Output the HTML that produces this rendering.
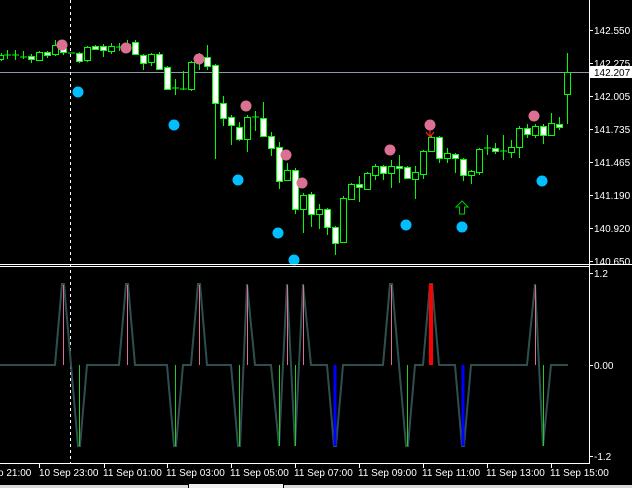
<!DOCTYPE html>
<html><head><meta charset="utf-8"><style>
html,body{margin:0;padding:0;background:#000;width:632px;height:488px;overflow:hidden}
svg{display:block}
text{font-family:"Liberation Sans",sans-serif;font-size:10px;fill:#fff}
</style></head><body>
<svg width="632" height="488" viewBox="0 0 632 488" xmlns="http://www.w3.org/2000/svg">
<rect width="632" height="488" fill="#000"/>
<line x1="0" y1="72.5" x2="589" y2="72.5" stroke="#8a9aa8" stroke-width="1"/>
<line x1="70.5" y1="0" x2="70.5" y2="463" stroke="#fff" stroke-dasharray="3,3"/>
<g stroke="#00ff00" stroke-width="1" shape-rendering="crispEdges">
<path d="M1.5 53V61M7.5 50V59M15.5 50V60M23.5 51V59M31.5 54V63M39.5 51V61M47.5 51V58M55.5 40V56M63.5 44V55M79.5 52V63M87.5 46V62M95.5 45V49M103.5 44V57M111.5 43V54M119.5 43V51M127.5 40V50M135.5 40V55M143.5 54V70M151.5 53V66M159.5 52V70M167.5 66V90M175.5 79V95M183.5 71V90M191.5 61V91M199.5 53V70M207.5 45V70M215.5 64V159M223.5 96V126M231.5 115V145M239.5 122V141M247.5 115V152M255.5 111V131M263.5 102V137M271.5 132V156M279.5 142V189M287.5 163V181M295.5 168V214M303.5 193V233M311.5 192V227M319.5 204V229M327.5 208V235M335.5 226V255M343.5 196V243M351.5 183V200M359.5 176V202M367.5 172V190M375.5 164V180M383.5 165V180M391.5 160V188M399.5 155V183M407.5 166V179M415.5 166V199M423.5 150V179M431.5 136V152M439.5 136V163M447.5 148V163M455.5 153V173M463.5 158V181M471.5 170V184M479.5 148V175M487.5 135V155M495.5 143V154M503.5 135V160M511.5 140V158M519.5 126V158M527.5 124V138M535.5 124V138M543.5 124V144M551.5 113V136M559.5 117V130M567.5 53V124"/>
<path d="M4 55H11M12 55H19M20 57H27M68 53H75M116 47H123M172 88H179M180 89H187M252 117H259M484 148H491M500 151H507"/>
</g>
<g fill="#000" stroke="#00ff00" stroke-width="1" shape-rendering="crispEdges">
<rect x="-1.5" y="55.5" width="5" height="4"/>
<rect x="36.5" y="52.5" width="6" height="8"/>
<rect x="52.5" y="45.5" width="6" height="9"/>
<rect x="84.5" y="47.5" width="6" height="13"/>
<rect x="108.5" y="46.5" width="6" height="5"/>
<rect x="124.5" y="44.5" width="6" height="4"/>
<rect x="148.5" y="54.5" width="6" height="8"/>
<rect x="188.5" y="62.5" width="6" height="27"/>
<rect x="244.5" y="117.5" width="6" height="22"/>
<rect x="284.5" y="170.5" width="6" height="10"/>
<rect x="300.5" y="195.5" width="6" height="14"/>
<rect x="316.5" y="209.5" width="6" height="5"/>
<rect x="340.5" y="198.5" width="6" height="44"/>
<rect x="348.5" y="184.5" width="6" height="15"/>
<rect x="364.5" y="173.5" width="6" height="16"/>
<rect x="372.5" y="166.5" width="6" height="9"/>
<rect x="388.5" y="166.5" width="6" height="7"/>
<rect x="412.5" y="172.5" width="6" height="7"/>
<rect x="420.5" y="151.5" width="6" height="23"/>
<rect x="428.5" y="137.5" width="6" height="14"/>
<rect x="444.5" y="153.5" width="6" height="5"/>
<rect x="468.5" y="171.5" width="6" height="4"/>
<rect x="476.5" y="149.5" width="6" height="23"/>
<rect x="508.5" y="147.5" width="6" height="5"/>
<rect x="516.5" y="128.5" width="6" height="19"/>
<rect x="532.5" y="126.5" width="6" height="9"/>
<rect x="548.5" y="123.5" width="6" height="12"/>
<rect x="564.5" y="72.5" width="6" height="22"/>
</g>
<g fill="#fff" stroke="#00ff00" stroke-width="1" shape-rendering="crispEdges">
<rect x="28.5" y="56.5" width="6" height="3"/>
<rect x="44.5" y="52.5" width="6" height="3"/>
<rect x="60.5" y="48.5" width="6" height="4"/>
<rect x="76.5" y="53.5" width="6" height="8"/>
<rect x="92.5" y="46.5" width="6" height="3"/>
<rect x="100.5" y="46.5" width="6" height="4"/>
<rect x="132.5" y="42.5" width="6" height="12"/>
<rect x="140.5" y="55.5" width="6" height="8"/>
<rect x="156.5" y="54.5" width="6" height="15"/>
<rect x="164.5" y="67.5" width="6" height="22"/>
<rect x="196.5" y="56.5" width="6" height="6"/>
<rect x="204.5" y="57.5" width="6" height="9"/>
<rect x="212.5" y="65.5" width="6" height="38"/>
<rect x="220.5" y="103.5" width="6" height="15"/>
<rect x="228.5" y="117.5" width="6" height="8"/>
<rect x="236.5" y="127.5" width="6" height="12"/>
<rect x="260.5" y="118.5" width="6" height="18"/>
<rect x="268.5" y="136.5" width="6" height="12"/>
<rect x="276.5" y="147.5" width="6" height="34"/>
<rect x="292.5" y="170.5" width="6" height="39"/>
<rect x="308.5" y="194.5" width="6" height="20"/>
<rect x="324.5" y="209.5" width="6" height="18"/>
<rect x="332.5" y="227.5" width="6" height="16"/>
<rect x="356.5" y="184.5" width="6" height="3"/>
<rect x="380.5" y="166.5" width="6" height="7"/>
<rect x="396.5" y="166.5" width="6" height="2"/>
<rect x="404.5" y="167.5" width="6" height="11"/>
<rect x="436.5" y="137.5" width="6" height="21"/>
<rect x="452.5" y="154.5" width="6" height="4"/>
<rect x="460.5" y="159.5" width="6" height="16"/>
<rect x="492.5" y="148.5" width="6" height="3"/>
<rect x="524.5" y="128.5" width="6" height="6"/>
<rect x="540.5" y="126.5" width="6" height="9"/>
<rect x="556.5" y="124.5" width="6" height="3"/>
</g>
<g fill="#db7093">
<circle cx="62" cy="45" r="5.5"/><circle cx="126" cy="48" r="5.5"/><circle cx="199" cy="59" r="5.5"/>
<circle cx="246" cy="106" r="5.5"/><circle cx="286" cy="155" r="5.5"/><circle cx="302" cy="183" r="5.5"/>
<circle cx="390" cy="150" r="5.5"/><circle cx="430" cy="125" r="5.5"/><circle cx="534" cy="116" r="5.5"/>
</g>
<g fill="#00bfff">
<circle cx="78" cy="92" r="5.5"/><circle cx="174" cy="125" r="5.5"/><circle cx="238" cy="180" r="5.5"/>
<circle cx="278" cy="233" r="5.5"/><circle cx="294" cy="260" r="5.5"/><circle cx="406" cy="225" r="5.5"/>
<circle cx="462" cy="227" r="5.5"/><circle cx="542" cy="181" r="5.5"/>
</g>
<path d="M426 132L430 137L434 132M430 130V137" stroke="#ff2020" fill="none" stroke-width="1.2"/>
<path d="M456 207L462 201L468 207H464.5V214H459.5V207Z" stroke="#00cc00" fill="none" stroke-width="1"/>
<line x1="0" y1="264.5" x2="632" y2="264.5" stroke="#fff"/>
<line x1="0" y1="266.5" x2="589" y2="266.5" stroke="#fff"/>
<line x1="0" y1="463.5" x2="589" y2="463.5" stroke="#fff"/>
<line x1="589.5" y1="0" x2="589.5" y2="464" stroke="#fff"/>
<g stroke="#fff"><path d="M589 30.5H593M589 63.5H593M589 96.5H593M589 129.5H593M589 162.5H593M589 195.5H593M589 228.5H593M589 261.5H593M589 273.5H593M589 365.5H593M589 456.5H593"/>
<path d="M39.5 463V468M104.5 463V468M167.5 463V468M231.5 463V468M295.5 463V468M359.5 463V468M423.5 463V468M487.5 463V468M551.5 463V468"/></g>
<text x="594" y="34">142.550</text>
<text x="594" y="67">142.275</text>
<rect x="590" y="66" width="42" height="12" fill="#fff"/>
<text x="594" y="76" style="fill:#000">142.207</text>
<text x="594" y="100">142.005</text>
<text x="594" y="133">141.735</text>
<text x="594" y="166">141.465</text>
<text x="594" y="199">141.190</text>
<text x="594" y="232">140.920</text>
<text x="594" y="265">140.650</text>
<text x="594" y="277">1.2</text>
<text x="594" y="369">0.00</text>
<text x="594" y="460">-1.2</text>
<path fill="none" stroke="#2f4f4f" stroke-width="2" d="M0 365H55L62 284H64L71 365L78 446H80L87 365H119L126 284H128L135 365H167L174 446H176L183 365H191L198 284H200L207 365H231L238 446H240L247 284L255 365H271L279 446L287 284L295 446L303 284L311 365H327L334 446H336L343 365H383L390 284H392L399 365L406 446H408L415 365H423L430 284H432L439 365H455L462 446H464L471 365H527L535 284L543 446L551 365H568"/>
<g stroke-width="1">
<path stroke="#db7093" d="M63.5 285V365M127.5 285V365M199.5 285V365M247.5 285V365M287.5 285V365M303.5 285V365M391.5 285V365M535.5 285V365"/>
<path stroke="#22cc22" d="M79.5 365V446M175.5 365V446M239.5 365V446M279.5 365V446M295.5 365V446M407.5 365V446M543.5 365V446"/>
</g>
<rect x="429" y="284" width="4" height="81" fill="#ff0000"/>
<rect x="333.5" y="365" width="3" height="81" fill="#0000ff"/>
<rect x="461.5" y="365" width="3" height="81" fill="#0000ff"/>
<text x="-2" y="476">o 21:00</text>
<text x="39" y="476">10 Sep 23:00</text>
<text x="103" y="476">11 Sep 01:00</text>
<text x="166" y="476">11 Sep 03:00</text>
<text x="230" y="476">11 Sep 05:00</text>
<text x="294" y="476">11 Sep 07:00</text>
<text x="358" y="476">11 Sep 09:00</text>
<text x="422" y="476">11 Sep 11:00</text>
<text x="486" y="476">11 Sep 13:00</text>
<text x="550" y="476">11 Sep 15:00</text>
<rect x="0" y="485" width="188" height="3" fill="#d8d8d8"/>
<rect x="189" y="484" width="94" height="4" fill="#f0f0f0"/>
<rect x="284" y="485" width="348" height="3" fill="#d8d8d8"/>
</svg>
</body></html>
